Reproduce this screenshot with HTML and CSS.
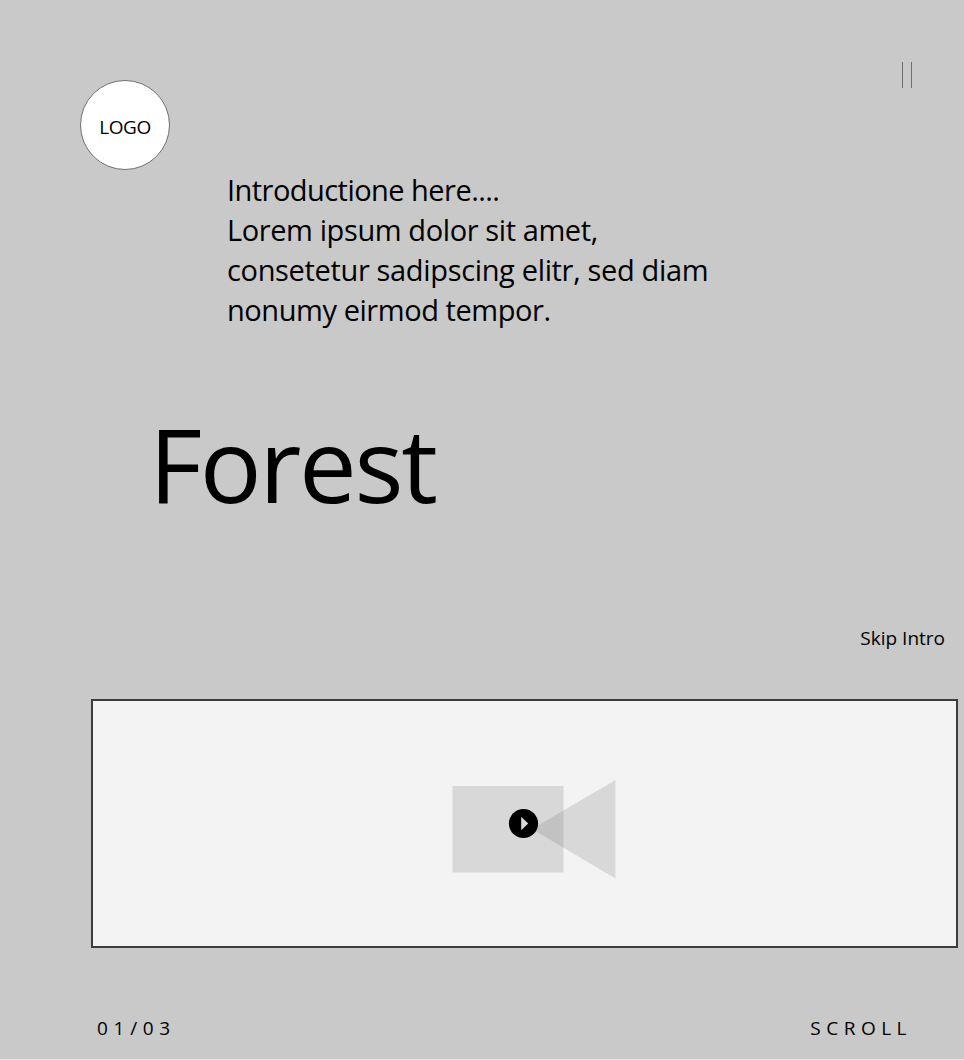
FILE: index.html
```html
<!DOCTYPE html>
<html lang="en">
<head>
<meta charset="utf-8">
<title>Forest</title>
<link rel="stylesheet" href="styles.css">
</head>
<body>
<div class="page">
  <header class="header">
    <div class="logo">LOGO</div>
    <div class="menu"></div>
  </header>
  <p class="intro">
    <span class="line line-a">Introductione here....</span>
    <span class="line line-b">Lorem ipsum dolor sit amet,</span>
    <span class="line line-c">consetetur sadipscing elitr, sed diam</span>
    <span class="line line-d">nonumy eirmod tempor.</span>
  </p>
  <h1 class="title">Forest</h1>
  <div class="skip"><span class="skip-text">Skip Intro</span></div>
  <div class="video">
    <svg class="camera" width="863" height="245" viewBox="93 701 863 245">
      <rect x="452.5" y="786" width="111" height="86.5" fill="#707070" fill-opacity=".2"/>
      <path d="M532 829L615.500 780V878.500Z" fill="#707070" fill-opacity=".2"/>
      <circle cx="523.5" cy="823.5" r="14.6" fill="#000"/>
      <path d="M521.200 816.800L528.200 823.500L521.200 830.200Z" fill="#d8d8d8"/>
    </svg>
  </div>
  <footer class="footer">
    <span class="count">01/03</span>
    <span class="scroll">SCROLL</span>
  </footer>
</div>
</body>
</html>
```
FILE: styles.css
```css
* { box-sizing: border-box; }
body {
  margin: 0;
  background: #e4e4e4;
  color: #000;
  font-family: "Open Sans", "Noto Sans", sans-serif;
  font-size: 19px;
  font-weight: 400;
}
.page {
  width: 964px;
  height: 1059px;
  padding-top: 62px;
  background: #c9c9c9;
  overflow: hidden;
}
.header {
  display: flex;
  justify-content: space-between;
  height: 108px;
  padding: 0 52px 0 80px;
}
.logo {
  display: flex;
  align-items: center;
  justify-content: center;
  width: 90px;
  height: 90px;
  margin-top: 18px;
  padding-top: 3px;
  border: 1px solid #707070;
  border-radius: 50%;
  background: #fff;
  letter-spacing: -0.4px;
}
.menu {
  width: 10px;
  height: 26px;
  border: solid #707070;
  border-width: 0 1px;
}
.intro {
  margin: 0 0 0 227px;
  font-size: 29px;
  line-height: 40px;
}
.line { display: block; white-space: nowrap; }
.line-a { letter-spacing: -0.54px; }
.line-b { letter-spacing: -0.4px; }
.line-c { letter-spacing: -0.34px; }
.line-d { letter-spacing: -0.44px; }
.title {
  height: 140px;
  margin: 63px 0 0 149px;
  font-size: 103px;
  font-weight: 400;
  line-height: 140px;
  letter-spacing: -2.4px;
}
.skip {
  height: 28px;
  margin-top: 91px;
  padding-right: 19px;
  text-align: right;
  line-height: 28px;
}
.video {
  width: 867px;
  height: 249px;
  margin: 47px 0 0 91px;
  border: 2px solid #3c3c3c;
  background: #f3f3f3;
}
.camera { display: block; }
.footer {
  display: flex;
  justify-content: space-between;
  margin-top: 66px;
  padding: 0 52px 0 97px;
  line-height: 28px;
}
.count { letter-spacing: 5.7px; }
.scroll { letter-spacing: 5.5px; }
```
